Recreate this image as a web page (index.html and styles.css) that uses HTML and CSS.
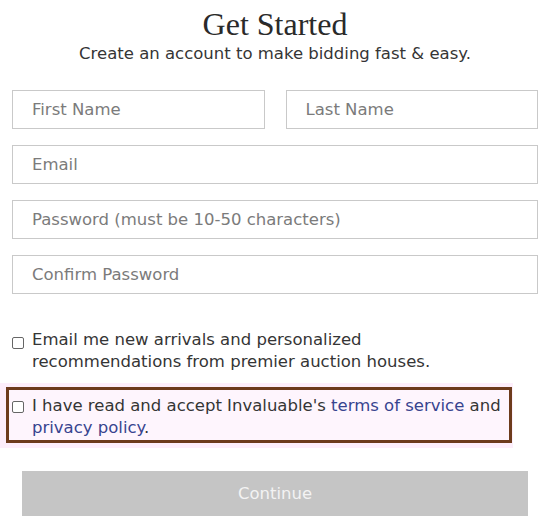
FILE: index.html
```html
<!DOCTYPE html>
<html lang="en">
<head>
<meta charset="utf-8">
<title>Get Started</title>
<link rel="stylesheet" href="styles.css">
</head>
<body>
<main class="signup">
  <h1 class="title">Get Started</h1>
  <p class="subtitle">Create an account to make bidding fast &amp; easy.</p>
  <form class="fields">
    <div class="name-row">
      <input class="field" type="text" placeholder="First Name">
      <input class="field" type="text" placeholder="Last Name">
    </div>
    <input class="field" type="email" placeholder="Email">
    <input class="field" type="password" placeholder="Password (must be 10-50 characters)">
    <input class="field" type="password" placeholder="Confirm Password">
  </form>
  <label class="check check-news">
    <input class="box box-news" type="checkbox">
    <span>Email me new arrivals and personalized recommendations from premier auction houses.</span>
  </label>
  <div class="consent-highlight">
    <div class="consent-box">
      <label class="check">
        <input class="box box-terms" type="checkbox">
        <span>I have read and accept Invaluable's <a class="link" href="#">terms of service</a> and <a class="link" href="#">privacy policy</a>.</span>
      </label>
    </div>
  </div>
  <button class="continue" type="button">Continue</button>
</main>
</body>
</html>
```
FILE: styles.css
```css
body {
  margin: 0;
  background: #ffffff;
  color: #353535;
  font-family: "DejaVu Sans", sans-serif;
}

.signup {
  width: 542px;
}

.title {
  margin: 5px 0 0 12px;
  width: 526px;
  text-align: center;
  font: 400 32px/38px "Liberation Serif", serif;
  color: #2a2a2a;
}

.subtitle {
  margin: 0 0 0 12px;
  width: 526px;
  text-align: center;
  font-size: 16.5px;
  line-height: 22px;
  color: #353535;
}

.fields {
  margin: 25px 0 0 12px;
  width: 526px;
  display: flex;
  flex-direction: column;
  gap: 16px;
}

.name-row {
  display: flex;
  gap: 21px;
}

.name-row .field {
  flex: 1;
  min-width: 0;
}

.field {
  display: block;
  width: 100%;
  height: 39px;
  box-sizing: border-box;
  margin: 0;
  padding: 0 19px;
  border: 1px solid #c9c9c9;
  border-radius: 0;
  background: #ffffff;
  font: 16.5px "DejaVu Sans", sans-serif;
  color: #333333;
  outline: none;
}

.field::placeholder {
  color: #7b7b7b;
  opacity: 1;
}

.check {
  display: flex;
  align-items: flex-start;
  gap: 8px;
  font-size: 16.5px;
  line-height: 22px;
  color: #353535;
}

.check-news {
  margin: 35px 0 0 12px;
  width: 496px;
}

.box {
  appearance: none;
  -webkit-appearance: none;
  flex: none;
  width: 12px;
  height: 12px;
  margin: 0;
  box-sizing: border-box;
  border: 1px solid #666666;
  border-radius: 2px;
  background: #ffffff;
}

.box-news {
  margin-top: 8px;
}

.box-terms {
  margin-top: 6px;
}

.consent-highlight {
  margin-top: 10px;
  width: 506px;
  padding: 4px 1px 5px 6px;
  background: #fdeefb;
}

.consent-box {
  border: 3px solid #6d3b1c;
  padding: 5px 0 1px 3px;
  background: #fef5fd;
}

.link {
  color: #38448f;
  text-decoration: none;
}

.continue {
  display: block;
  margin: 23px 0 0 22px;
  width: 506px;
  height: 45px;
  border: 0;
  border-radius: 0;
  background: #c5c5c5;
  color: #f3f3f3;
  font: 16.5px "DejaVu Sans", sans-serif;
  cursor: default;
}
```
